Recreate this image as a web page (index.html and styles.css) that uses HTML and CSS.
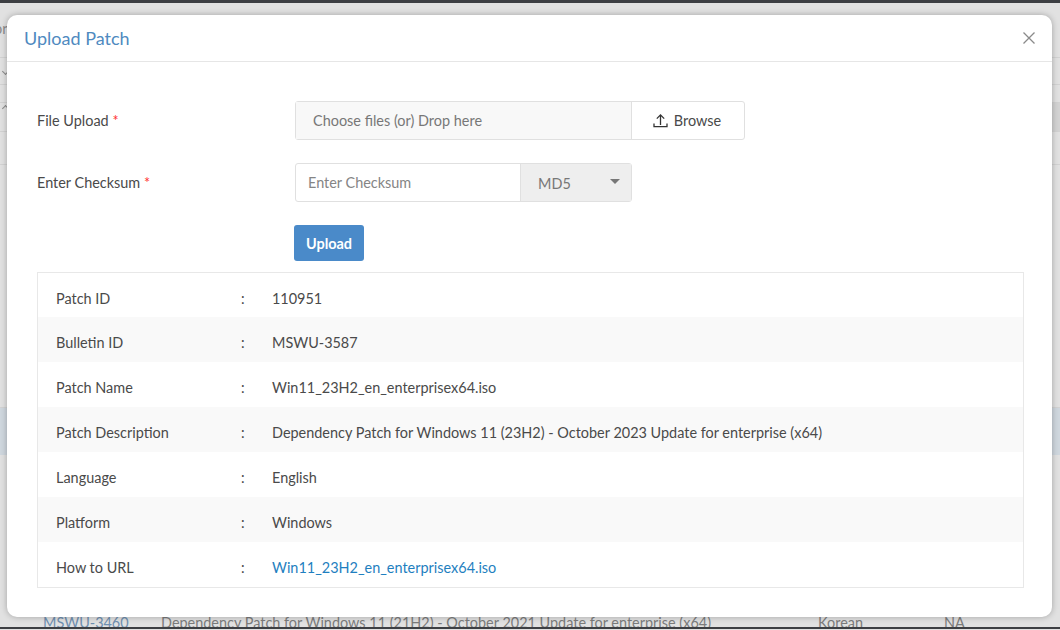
FILE: index.html
```html
<!DOCTYPE html>
<html lang="en">
<head>
<meta charset="utf-8">
<title>Upload Patch</title>
<link rel="stylesheet" href="styles.css">
</head>
<body>
<div class="page">
  <div class="topbar"></div>
  <div class="bgrow bg-head"><span class="bg-or">or</span></div>
  <div class="bgrow bg-a"><i class="chev"></i></div>
  <div class="bgrow bg-b"></div>
  <div class="bgrow bg-c"><i class="chev chev-up"></i><i class="bg-band"></i></div>
  <div class="bgrow bg-d"></div>
  <div class="bgrow bg-e"></div>
  <div class="bgrow bg-sel"></div>
  <div class="bgrow bg-f"></div>
  <div class="backrow">
    <span class="back-id">MSWU-3460</span>
    <span class="back-desc">Dependency Patch for Windows 11 (21H2) - October 2021 Update for enterprise (x64)</span>
    <span class="back-lang">Korean</span>
    <span class="back-na">NA</span>
  </div>
</div>
<div class="modal">
  <header class="modal-head">
    <h2 class="modal-title">Upload Patch</h2>
    <svg class="close" width="12" height="12" viewBox="0 0 12 12"><path d="M.5.5l11 11M11.5.5l-11 11" fill="none" stroke="#8a8a8a" stroke-width="1.3"/></svg>
  </header>
  <div class="modal-body">
    <div class="form-row">
      <label class="form-label">File Upload <span class="req">*</span></label>
      <div class="file-group">
        <span class="file-text">Choose files (or) Drop here</span>
        <span class="browse">
          <svg width="15" height="15" viewBox="0 0 15 15"><path d="M7.5 12V2M3.8 5.6l3.7-3.7 3.7 3.7M1 10.5V13.6h13v-3.1" fill="none" stroke="#333" stroke-width="1.3"/></svg>
          Browse
        </span>
      </div>
    </div>
    <div class="form-row form-row-2">
      <label class="form-label">Enter Checksum <span class="req">*</span></label>
      <div class="check-group">
        <span class="check-input">Enter Checksum</span>
        <span class="check-select">MD5<i class="caret"></i></span>
      </div>
    </div>
    <div class="action-row"><button class="upload-btn">Upload</button></div>
    <div class="details">
      <div class="drow"><span class="dk">Patch ID</span><span class="dc">:</span><span class="dv">110951</span></div>
      <div class="drow"><span class="dk">Bulletin ID</span><span class="dc">:</span><span class="dv">MSWU-3587</span></div>
      <div class="drow"><span class="dk">Patch Name</span><span class="dc">:</span><span class="dv">Win11_23H2_en_enterprisex64.iso</span></div>
      <div class="drow"><span class="dk">Patch Description</span><span class="dc">:</span><span class="dv">Dependency Patch for Windows 11 (23H2) - October 2023 Update for enterprise (x64)</span></div>
      <div class="drow"><span class="dk">Language</span><span class="dc">:</span><span class="dv">English</span></div>
      <div class="drow"><span class="dk">Platform</span><span class="dc">:</span><span class="dv">Windows</span></div>
      <div class="drow"><span class="dk">How to URL</span><span class="dc">:</span><a class="dv link" href="#">Win11_23H2_en_enterprisex64.iso</a></div>
    </div>
  </div>
</div>
</body>
</html>
```
FILE: styles.css
```css
* { box-sizing: border-box; }
html, body { margin: 0; height: 630px; overflow: hidden; }
body { position: relative; background: #e1e1e1; font-family: Lato, "Liberation Sans", sans-serif; font-size: 14.45px; color: #4a4a4a; }
.page { height: 630px; display: flex; flex-direction: column; }
.topbar { height: 3px; background: #3d3f43; flex: none; }
.bgrow { flex: none; border-bottom: 1px solid #d2d2d2; }
.bg-head { height: 55px; padding-top: 17px; line-height: 18px; color: #8a8a8a; text-indent: -6px; overflow: hidden; }
.bg-a { height: 27px; padding: 11px 0 0 3px; }
.bg-b { height: 18px; }
.chev { display: block; width: 5px; height: 5px; border: solid #8a8a8a; border-width: 0 1px 1px 0; transform: rotate(45deg); }
.chev-up { margin: 3px 0 0 3px; transform: rotate(225deg); }
.bg-c { height: 29px; display: flex; justify-content: space-between; align-items: flex-start; }
.bg-band { display: block; height: 100%; width: 8px; background: #d3d3d3; }
.bg-d { height: 33px; }
.bg-e { height: 243px; }
.bg-sel { height: 47px; background: #cfd7de; border-bottom: 0; }
.bg-f { height: 158px; border-bottom: 0; }
.backrow { flex: none; height: 17px; margin-top: -1px; display: flex; align-items: flex-start; line-height: 22px; color: #7c7c7c; padding-left: 43px; border-bottom: 2px solid #3d3f43; overflow: hidden; }
.back-id { width: 118px; color: #6f8fb0; }
.back-desc { width: 657px; }
.back-lang { width: 126px; }
.modal { position: absolute; left: 7px; top: 15px; width: 1045px; height: 602px; background: #fff; border-radius: 10px; box-shadow: 0 0 6px rgba(0,0,0,.28); }
.modal-head { height: 47px; display: flex; align-items: center; justify-content: space-between; padding: 0 17px; border-bottom: 1px solid #e6e6e6; }
.modal-title { margin: 0; font-size: 18px; font-weight: 400; color: #4f8abf; }
.modal-body { padding: 39px 28px 0 30px; }
.form-row { display: flex; align-items: center; height: 39px; }
.form-row-2 { margin-top: 23px; }
.form-label { width: 258px; padding-bottom: 1px; }
.req { color: #f33; }
.file-group { display: flex; width: 450px; height: 39px; border: 1px solid #e0e0e0; border-radius: 3px; }
.file-text { flex: 1; background: #f8f8f8; padding-left: 17px; line-height: 37px; color: #777; border-right: 1px solid #e0e0e0; }
.browse { width: 112px; padding: 0 2px 1px 0; display: flex; align-items: center; justify-content: center; gap: 6px; }
.check-group { display: flex; width: 337px; height: 39px; border: 1px solid #e0e0e0; border-radius: 3px; }
.check-input { width: 225px; padding-left: 12px; line-height: 37px; color: #858585; border-right: 1px solid #e0e0e0; }
.check-select { flex: 1; background: #eee; padding-left: 17px; line-height: 39px; color: #777; position: relative; }
.caret { position: absolute; right: 11px; top: 15px; border: 5px solid transparent; border-top: 5px solid #777; border-bottom: 0; }
.action-row { padding: 23px 0 0 257px; }
.upload-btn { display: block; width: 70px; height: 36px; background: #4a8ac9; color: #fff; border: 0; border-radius: 3px; font: 700 14.45px Lato, "Liberation Sans", sans-serif; }
.details { margin-top: 11px; border: 1px solid #e8e8e8; height: 316px; }
.drow { display: flex; align-items: center; height: 45px; padding: 6px 0 0 18px; }
.drow:first-child { height: 44px; }
.drow:nth-child(even) { background: #f9f9f9; }
.dk { width: 185px; }
.dc { width: 31px; }
.link { color: #1f7fc0; text-decoration: none; }
```
